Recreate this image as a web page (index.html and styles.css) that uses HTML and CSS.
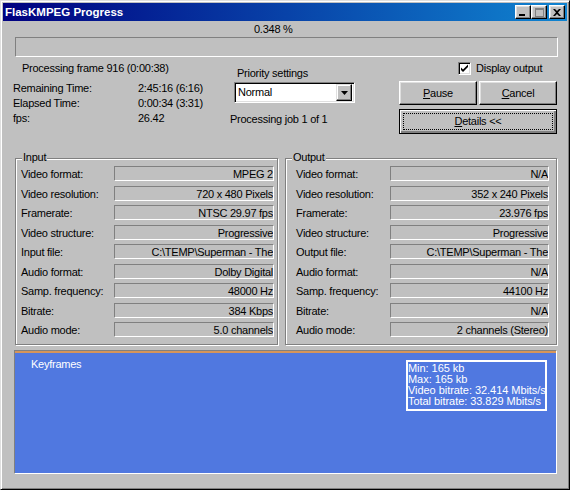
FILE: index.html
```html
<!DOCTYPE html>
<html lang="en">
<head>
    <meta charset="UTF-8">
    <title>FlasKMPEG Progress</title>
    <link rel="stylesheet" href="styles.css">
</head>
<body>
    <div class="window">
        <div class="titlebar">
            <span class="title">FlasKMPEG Progress</span>
            <div class="caption-btns">
                <span class="cap-btn"><svg width="8" height="7" viewBox="0 0 8 7"><rect x="0" y="5" width="6" height="2" fill="#000"/></svg></span>
                <span class="cap-btn"><svg width="9" height="9" viewBox="0 0 9 9"><rect x="0.5" y="0.5" width="8" height="8" fill="none" stroke="#808080"/><rect x="0" y="0" width="9" height="2" fill="#808080"/></svg></span>
                <span class="cap-btn close"><svg width="8" height="7" viewBox="0 0 8 7"><path d="M0 0h2l2 2 2-2h2L5 3.5 8 7H6L4 5 2 7H0l3-3.5z" fill="#000"/></svg></span>
            </div>
        </div>

        <div class="percent">0.348 %</div>
        <div class="progress"></div>

        <div class="top">
            <div class="times">
                <div class="frame">Processing frame 916 (0:00:38)</div>
                <div class="time-row"><span class="t-label">Remaining Time:</span><span>2:45:16 (6:16)</span></div>
                <div class="time-row"><span class="t-label">Elapsed Time:</span><span>0:00:34 (3:31)</span></div>
                <div class="time-row"><span class="t-label">fps:</span><span>26.42</span></div>
            </div>
            <div class="priority">
                <div class="prio-label">Priority settings</div>
                <div class="combo">
                    <span class="combo-text">Normal</span>
                    <span class="combo-btn"><svg width="7" height="4" viewBox="0 0 7 4"><path d="M0 0h7L3.5 4z" fill="#000"/></svg></span>
                </div>
                <div class="job">Processing job 1 of 1</div>
            </div>
            <div class="actions">
                <div class="check-row">
                    <span class="checkbox"><svg width="9" height="9" viewBox="0 0 9 9"><path d="M1 3.5l2 2 5-5v2.5L3 8 1 6z" fill="#000"/></svg></span>
                    <span>Display output</span>
                </div>
                <div class="btn-row">
                    <button class="btn"><u>P</u>ause</button>
                    <button class="btn"><u>C</u>ancel</button>
                </div>
                <button class="btn details"><span class="focus"><u>D</u>etails &lt;&lt;</span></button>
            </div>
        </div>

        <div class="groups">
            <div class="group group-in">
                <span class="legend">Input</span>
                <div class="fields">
                    <span>Video format:</span><span class="val">MPEG 2</span>
                    <span>Video resolution:</span><span class="val">720 x 480 Pixels</span>
                    <span>Framerate:</span><span class="val">NTSC 29.97 fps</span>
                    <span>Video structure:</span><span class="val">Progressive</span>
                    <span>Input file:</span><span class="val">C:\TEMP\Superman - The</span>
                    <span>Audio format:</span><span class="val">Dolby Digital</span>
                    <span>Samp. frequency:</span><span class="val">48000 Hz</span>
                    <span>Bitrate:</span><span class="val">384 Kbps</span>
                    <span>Audio mode:</span><span class="val">5.0 channels</span>
                </div>
            </div>
            <div class="group group-out">
                <span class="legend">Output</span>
                <div class="fields">
                    <span>Video format:</span><span class="val">N/A</span>
                    <span>Video resolution:</span><span class="val">352 x 240 Pixels</span>
                    <span>Framerate:</span><span class="val">23.976 fps</span>
                    <span>Video structure:</span><span class="val">Progressive</span>
                    <span>Output file:</span><span class="val">C:\TEMP\Superman - The</span>
                    <span>Audio format:</span><span class="val">N/A</span>
                    <span>Samp. frequency:</span><span class="val">44100 Hz</span>
                    <span>Bitrate:</span><span class="val">N/A</span>
                    <span>Audio mode:</span><span class="val">2 channels (Stereo)</span>
                </div>
            </div>
        </div>

        <div class="graph">
            <div class="graph-title">Keyframes</div>
            <div class="bitrates">
                <div>Min: 165 kb</div>
                <div>Max: 165 kb</div>
                <div>Video bitrate: 32.414 Mbits/s</div>
                <div>Total bitrate: 33.829 Mbits/s</div>
            </div>
        </div>
    </div>
</body>
</html>
```

FILE: styles.css
```css
* {
    box-sizing: border-box;
    margin: 0;
    padding: 0;
}

body {
    font-family: "Liberation Sans", Arial, sans-serif;
    font-size: 11px;
    line-height: 15px;
    letter-spacing: -0.25px;
    color: #000;
    background: #c0c0c0;
}

.window {
    width: 570px;
    height: 490px;
    padding: 2px;
    background: #c0c0c0;
    border: 1px solid;
    border-color: #dfdfdf #000 #000 #dfdfdf;
    box-shadow: inset 1px 1px #fff, inset -1px -1px #808080;
}

/* title bar */
.titlebar {
    height: 18px;
    display: flex;
    justify-content: space-between;
    padding: 2px 2px 0 2px;
    background: linear-gradient(90deg, #000080, #1084d0);
}

.title {
    color: #fff;
    font-weight: bold;
    font-size: 11.5px;
    line-height: 14px;
    letter-spacing: 0;
}

.caption-btns {
    display: flex;
}

.cap-btn {
    width: 16px;
    height: 14px;
    display: flex;
    align-items: center;
    justify-content: center;
    background: #c0c0c0;
    border: 1px solid;
    border-color: #fff #000 #000 #fff;
    box-shadow: inset -1px -1px #808080, inset 1px 1px #dfdfdf;
}

.cap-btn.close {
    margin-left: 2px;
}

/* progress */
.percent {
    margin-top: 1px;
    padding-left: 251px;
}

.progress {
    margin-left: 12px;
    width: 543px;
    height: 20px;
    border: 1px solid;
    border-color: #808080 #fff #fff #808080;
}

/* top area */
.top {
    display: flex;
    padding-left: 10px;
}

.times {
    width: 217px;
}

.frame {
    margin-top: 4px;
    padding-left: 9px;
}

.time-row {
    display: flex;
}

.frame + .time-row {
    margin-top: 5px;
}

.t-label {
    width: 125px;
}

.priority {
    width: 169px;
}

.prio-label {
    margin-top: 9px;
    padding-left: 7px;
}

.combo {
    margin: 1px 0 0 4px;
    width: 121px;
    height: 21px;
    display: flex;
    justify-content: space-between;
    align-items: center;
    background: #fff;
    border: 1px solid;
    border-color: #808080 #fff #fff #808080;
    box-shadow: inset 1px 1px #000, inset -1px -1px #dfdfdf;
    padding: 2px;
}

.combo-text {
    padding-left: 1px;
}

.combo-btn {
    width: 16px;
    height: 17px;
    display: flex;
    align-items: center;
    justify-content: center;
    background: #c0c0c0;
    border: 1px solid;
    border-color: #dfdfdf #000 #000 #dfdfdf;
    box-shadow: inset -1px -1px #808080, inset 1px 1px #fff;
}

.job {
    margin-top: 9px;
}

.actions {
    width: 158px;
}

.check-row {
    margin-top: 4px;
    padding-left: 59px;
    display: flex;
    align-items: center;
    gap: 5px;
}

.checkbox {
    width: 13px;
    height: 13px;
    display: flex;
    align-items: center;
    justify-content: center;
    background: #fff;
    border: 1px solid;
    border-color: #808080 #fff #fff #808080;
    box-shadow: inset 1px 1px #000, inset -1px -1px #dfdfdf;
}

.btn-row {
    display: flex;
    gap: 2px;
    margin-top: 5px;
}

.btn {
    font-family: inherit;
    font-size: 11px;
    letter-spacing: inherit;
    width: 78px;
    height: 24px;
    background: #c0c0c0;
    border: 1px solid;
    border-color: #fff #000 #000 #fff;
    box-shadow: inset -1px -1px #808080, inset 1px 1px #dfdfdf;
    color: #000;
}

.details {
    width: 158px;
    height: 25px;
    margin-top: 4px;
    border: 1px solid #000;
    box-shadow: inset 1px 1px #fff, inset -1px -1px #808080, inset -2px -2px #808080;
    padding: 3px;
    display: block;
}

.focus {
    display: block;
    height: 17px;
    line-height: 15px;
    border: 1px dotted #000;
}

/* group boxes */
.groups {
    display: flex;
    gap: 7px;
    padding-left: 12px;
    margin-top: 24px;
}

.group {
    position: relative;
    height: 187px;
    border: 1px solid #808080;
    box-shadow: inset 1px 1px #fff, 1px 1px #fff;
    padding-top: 7px;
}

.group-in {
    width: 263px;
    padding-left: 5px;
}

.group-out {
    width: 272px;
    padding-left: 10px;
}

.legend {
    position: absolute;
    top: -9px;
    left: 6px;
    padding: 0 1px;
    background: #c0c0c0;
}

.fields {
    display: grid;
    grid-auto-rows: 15px;
    row-gap: 4.5px;
    line-height: 16px;
}

.group-in .fields {
    grid-template-columns: 93px 160px;
}

.group-out .fields {
    grid-template-columns: 94px 159px;
}

.val {
    text-align: right;
    white-space: nowrap;
    overflow: hidden;
    border: 1px solid;
    border-color: #808080 #fff #fff #808080;
    line-height: 14px;
}

/* keyframe graph */
.graph {
    margin: 5px 0 0 11px;
    width: 543px;
    height: 124px;
    display: flex;
    justify-content: space-between;
    align-items: flex-start;
    background: #5078e0;
    border: 1px solid;
    border-color: #808080 #fff #fff #808080;
    box-shadow: inset 0 2px #d6955a;
    padding: 6px 9px 0 16px;
    color: #fff;
}

.bitrates {
    margin-top: 3px;
    width: 141px;
    height: 51px;
    border: 2px solid #fff;
    padding-top: 1px;
    line-height: 11px;
    letter-spacing: -0.05px;
    white-space: nowrap;
    overflow: hidden;
}
```
